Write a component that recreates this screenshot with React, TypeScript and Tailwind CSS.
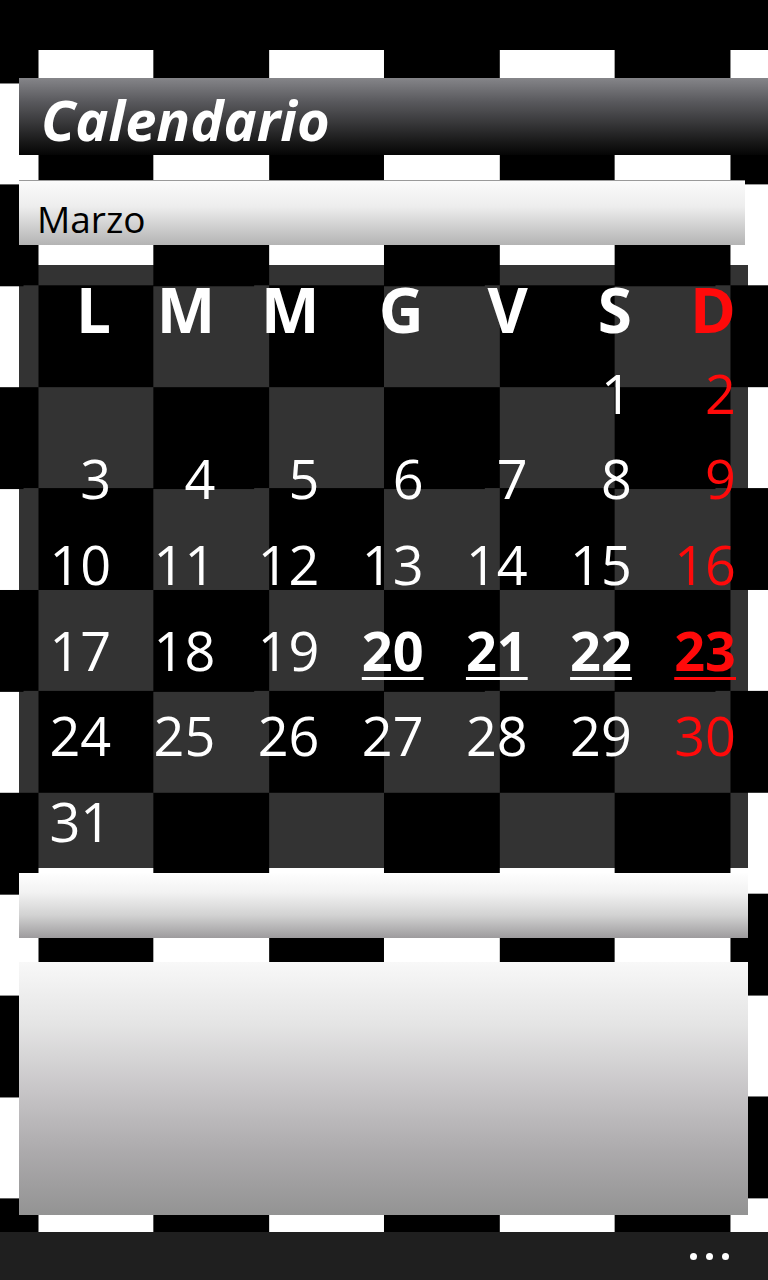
const days: (number | null)[] = [
  null, null, null, null, null, 1, 2,
  3, 4, 5, 6, 7, 8, 9,
  10, 11, 12, 13, 14, 15, 16,
  17, 18, 19, 20, 21, 22, 23,
  24, 25, 26, 27, 28, 29, 30,
  31, null, null, null, null, null, null,
];

const heads = ['L', 'M', 'M', 'G', 'V', 'S', 'D'];
const week = [20, 21, 22, 23];

export default function App() {
  return (
    <div
      className="min-h-[1280px] w-[768px] flex flex-col overflow-hidden bg-[conic-gradient(#fff_25%,#000_0_50%,#fff_0_75%,#000_0)] bg-[length:230.67px_202.8px] bg-[position:153.33px_184.4px]"
      style={{ fontFamily: '"Open Sans", "Noto Sans", sans-serif' }}
    >
      {/* system tray */}
      <div className="h-[50px] bg-black shrink-0" />

      <div className="flex flex-col pl-[19px]">
        {/* title */}
        <div className="mt-[28px] h-[77px] flex items-center pl-[22px] bg-[linear-gradient(to_bottom,#858589,#5a5a5e_30%,#38383a_58%,#161616_85%,#050505)]">
          <h1 className="text-[56px] font-bold italic text-white leading-none pt-[4px]">Calendario</h1>
        </div>

        {/* month picker */}
        <div className="mt-[25px] h-[65px] w-[726px] flex items-center pl-[18px] border-t border-[#9a9a9a] bg-[linear-gradient(to_bottom,#fbfbfb,#ededed_40%,#b4b4b4)]">
          <span className="text-[37px] text-black leading-none pt-[10px]">Marzo</span>
        </div>

        {/* calendar */}
        <div className="mt-[20px] h-[603px] w-[729px] bg-black/80 pt-[3px]">
          <div className="grid grid-cols-7">
            {heads.map((h, i) => (
              <div
                key={i}
                className={`h-[82px] flex items-center justify-end pr-[12px] text-[62px] font-bold leading-none ${i === 6 ? 'text-[#ff0a0a]' : 'text-white'}`}
              >
                {h}
              </div>
            ))}
            {days.map((d, i) => {
              const sunday = i % 7 === 6;
              const hot = d !== null && week.includes(d);
              return (
                <div
                  key={i}
                  className={`h-[85.6px] flex items-center justify-end pr-[12px] text-[54px] leading-none ${sunday ? 'text-[#ff0a0a]' : 'text-white'} ${hot ? 'font-bold underline decoration-[3px] underline-offset-[6px]' : ''}`}
                >
                  {d}
                </div>
              );
            })}
          </div>
        </div>

        {/* bar */}
        <div className="mt-[5px] h-[65px] w-[729px] bg-[linear-gradient(to_bottom,#fefefe,#f2f2f2_30%,#d2d2d2_65%,#9d9b9d)]" />

        {/* note panel */}
        <div className="mt-[24px] h-[253px] w-[729px] bg-[linear-gradient(to_bottom,#f8f8f8,#e4e4e4_25%,#c8c6c8_50%,#acaaac_75%,#939393)]" />
      </div>

      {/* app bar */}
      <div className="mt-[17px] h-[48px] bg-[#1f1f1f] flex items-center justify-end pr-[39px] gap-[9px]">
        <span className="w-[7px] h-[7px] rounded-full bg-white" />
        <span className="w-[7px] h-[7px] rounded-full bg-white" />
        <span className="w-[7px] h-[7px] rounded-full bg-white" />
      </div>
    </div>
  );
}
